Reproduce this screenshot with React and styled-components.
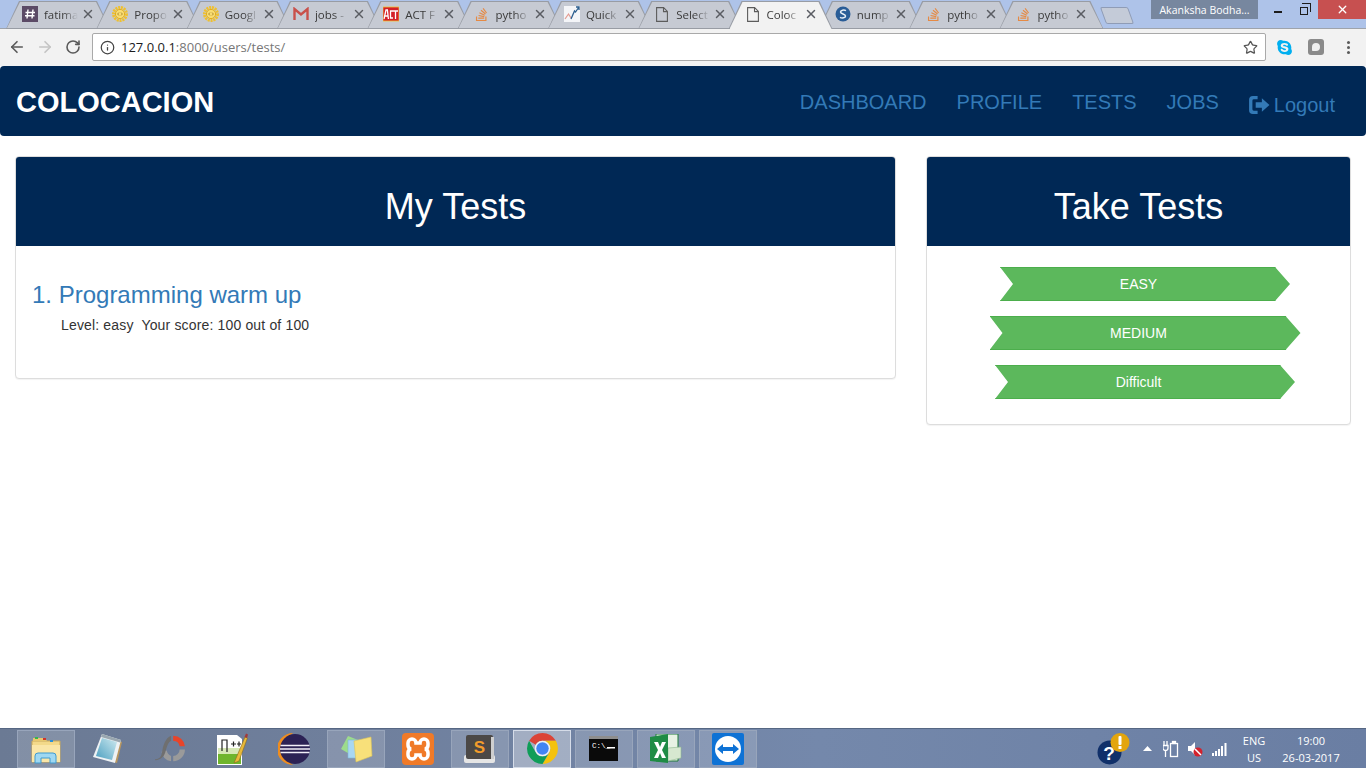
import React from 'react';
import styled, { createGlobalStyle } from 'styled-components';
import { ArrowLeft, ArrowRight, RotateCw, Info, Star, X } from 'lucide-react';
import { FaStackOverflow, FaSkype } from 'react-icons/fa';

const GlobalStyle = createGlobalStyle`
  html, body {
    margin: 0;
    padding: 0;
    background: #fff;
    font-family: "Liberation Sans", Arial, sans-serif;
    font-size: 14px;
    color: #333;
  }
  * { box-sizing: border-box; }
`;

const Page = styled.div`
  width: 1366px;
  height: 768px;
  display: flex;
  flex-direction: column;
  overflow: hidden;
`;

/* browser chrome */
const TabStrip = styled.div`
  height: 29px;
  flex: none;
  display: flex;
  align-items: flex-start;
  padding-left: 6px;
  background: #aec3e9;
  border-bottom: 1px solid #9ea3ab;
`;

const Tab = styled.div`
  position: relative;
  width: 104px;
  height: 28px;
  margin-top: 1px;
  margin-right: -13.7px;
  flex: none;
  display: flex;
  align-items: center;
  padding: 0 0 2px 16px;
  z-index: ${({ $active }) => ($active ? 2 : 1)};
  clip-path: polygon(0 100%, 13px 0, calc(100% - 13px) 0, 100% 100%);
  background: #989ca4;

  &::before {
    content: '';
    position: absolute;
    inset: 1px 1px ${({ $active }) => ($active ? '0' : '1px')} 1px;
    clip-path: polygon(0 100%, 13px 0, calc(100% - 13px) 0, 100% 100%);
    background: ${({ $active }) => ($active ? '#f2f2f2' : '#c6cad3')};
  }
`;

const FavIcon = styled.span`
  position: relative;
  width: 16px;
  height: 16px;
  flex: none;
  display: flex;
  align-items: center;
  justify-content: center;
`;

const TabTitle = styled.span`
  position: relative;
  width: 34px;
  margin-left: 6px;
  overflow: hidden;
  white-space: nowrap;
  font-family: "Open Sans", sans-serif;
  font-size: 11.5px;
  color: #3a3a3a;
  -webkit-mask-image: linear-gradient(90deg, #000 55%, transparent 100%);
  mask-image: linear-gradient(90deg, #000 55%, transparent 100%);
`;

const TabClose = styled(X)`
  position: relative;
  margin-left: 3px;
  flex: none;
  color: #5a5d63;
`;

const NewTab = styled.div`
  width: 28px;
  height: 17px;
  margin: 7px 0 0 13px;
  flex: none;
  transform: skewX(20deg);
  border: 1px solid #8f9cb6;
  border-radius: 2px;
  background: #c4cbd8;
`;

const ProfileChip = styled.div`
  width: 107px;
  height: 19px;
  margin-left: auto;
  flex: none;
  display: flex;
  align-items: center;
  justify-content: center;
  background: #77879f;
  color: #fff;
  font-family: "Open Sans", sans-serif;
  font-size: 10.5px;
`;

const WindowControls = styled.div`
  width: 108px;
  height: 19px;
  flex: none;
  display: flex;
  align-items: center;
`;

const WindowButton = styled.div`
  height: 19px;
  width: ${({ $w }) => $w}px;
  display: flex;
  align-items: center;
  justify-content: center;
  color: #fff;
  background: ${({ $close }) => ($close ? '#c75050' : 'transparent')};
`;

const Minimize = styled.span`
  width: 8px;
  height: 2px;
  margin-top: 5px;
  background: #1c1c1c;
`;

const Restore = styled.span`
  position: relative;
  width: 8px;
  height: 8px;
  margin: 3px 8px 0 0;
  border: 1.5px solid #1c1c1c;

  &::before {
    content: '';
    position: absolute;
    left: 1px;
    top: -5px;
    width: 8px;
    height: 8px;
    border-top: 1.5px solid #1c1c1c;
    border-right: 1.5px solid #1c1c1c;
  }
`;

const Toolbar = styled.div`
  height: 37px;
  flex: none;
  display: flex;
  align-items: center;
  padding: 0 8px 1px 8px;
  background: #f2f2f2;
`;

const NavIcon = styled.span`
  width: 18px;
  height: 18px;
  margin-right: 10px;
  flex: none;
  display: flex;
  align-items: center;
  justify-content: center;
  color: ${({ $off }) => ($off ? '#c4c4c4' : '#5a5a5a')};
`;

const Omnibox = styled.div`
  width: 1174px;
  height: 28px;
  flex: none;
  display: flex;
  align-items: center;
  padding: 0 7px;
  background: #fff;
  border: 1px solid #a9a9a9;
  border-radius: 2px;
`;

const Url = styled.span`
  margin-left: 6px;
  font-family: "Open Sans", sans-serif;
  font-size: 13px;
  color: #1c1c1c;

  span { color: #767676; }
`;

const OmniStar = styled(Star)`
  margin-left: auto;
  color: #555;
`;

const ExtensionSlot = styled.span`
  width: 32px;
  margin-left: ${({ $first }) => ($first ? '2px' : '0')};
  flex: none;
  display: flex;
  justify-content: center;
  align-items: center;
  color: #00aff0;
`;

const ExtSquare = styled.span`
  width: 16px;
  height: 16px;
  display: flex;
  align-items: center;
  justify-content: center;
  border-radius: 3px;
  background: #8a8a8a;

  &::before {
    content: '';
    width: 8px;
    height: 8px;
    border-radius: 50% 50% 50% 10%;
    background: #f0f0f0;
  }
`;

const MenuDots = styled.span`
  width: 3px;
  height: 3px;
  margin-left: 15px;
  border-radius: 50%;
  background: #5a5a5a;
  box-shadow: 0 -5px 0 #5a5a5a, 0 5px 0 #5a5a5a;
`;

/* site */
const Navbar = styled.nav`
  height: 70px;
  flex: none;
  display: flex;
  align-items: center;
  padding: 2px 31px 0 16px;
  background: #002855;
  border-radius: 4px;
`;

const Brand = styled.a`
  color: #fff;
  font-size: 29px;
  font-weight: 700;
`;

const NavLinks = styled.div`
  margin-left: auto;
  display: flex;
  align-items: center;
  gap: 30px;
`;

const NavLink = styled.a`
  color: #337ab7;
  font-size: 20px;
  line-height: 24px;
`;

const LogoutLink = styled(NavLink)`
  display: flex;
  align-items: center;
  gap: 4px;
  margin-top: 6px;
`;

const Content = styled.main`
  flex: 1;
  display: grid;
  grid-template-columns: 881px 425px;
  column-gap: 30px;
  align-items: start;
  padding: 20px 15px 0;
`;

const Panel = styled.section`
  background: #fff;
  border: 1px solid #ddd;
  border-radius: 4px;
  box-shadow: 0 1px 1px rgba(0, 0, 0, 0.05);
  overflow: hidden;
`;

const PanelHeading = styled.div`
  height: 89px;
  padding-top: 11px;
  display: flex;
  align-items: center;
  justify-content: center;
  background: #002855;
  color: #fff;
  font-size: 36px;
`;

const TestsBody = styled.div`
  height: 132px;
  padding: 36px 16px 0;
`;

const TestTitle = styled.a`
  display: block;
  color: #337ab7;
  font-size: 24px;
  line-height: 26px;
`;

const TestMeta = styled.p`
  margin: 7px 0 0 29px;
  line-height: 20px;
  letter-spacing: 0.16px;
  color: #333;
`;

const LevelsBody = styled.div`
  display: flex;
  flex-direction: column;
  align-items: center;
  gap: 15px;
  padding: 21px 0 25px;
`;

const LevelButton = styled.a`
  width: ${({ $width }) => $width}px;
  height: 34px;
  margin-left: 13px;
  padding-right: 13px;
  display: flex;
  align-items: center;
  justify-content: center;
  color: #fff;
  background: #5cb85c;
  border-top: 1px solid #4cae4c;
  border-bottom: 1px solid #4cae4c;
  clip-path: polygon(0 0, calc(100% - 15px) 0, 100% 50%, calc(100% - 15px) 100%, 0 100%, 13px 50%);
`;

/* taskbar */
const Taskbar = styled.footer`
  height: 40px;
  flex: none;
  display: flex;
  align-items: center;
  gap: 4px;
  padding: 0 0 0 17px;
  background: linear-gradient(90deg, #6b7a94 0%, #6f7f9c 25%, #7488ab 60%, #6a7ea3 100%);
  border-top: 1px solid #566783;
`;

const TaskItem = styled.div`
  width: 58px;
  height: 38px;
  flex: none;
  display: flex;
  align-items: center;
  justify-content: center;
  border: 1px solid ${({ $state }) => ($state === 'active' ? '#d5dce8' : $state === 'open' ? '#98a5bb' : 'transparent')};
  background: ${({ $state }) => ($state === 'active' ? 'rgba(255,255,255,0.35)' : $state === 'open' ? 'rgba(255,255,255,0.16)' : 'transparent')};
`;

const Tray = styled.div`
  margin-left: auto;
  height: 38px;
  display: flex;
  align-items: center;
  padding-right: 19px;
  color: #fff;
  font-family: "Open Sans", sans-serif;
  font-size: 11px;
`;

const TrayIcon = styled.span`
  width: ${({ $w }) => $w}px;
  display: flex;
  justify-content: center;
  align-items: center;
  flex: none;
`;

const TrayText = styled.div`
  width: ${({ $w }) => $w}px;
  flex: none;
  text-align: center;
  line-height: 17px;
`;

const HashIcon = () => (
  <svg width="16" height="16" viewBox="0 0 16 16"><rect width="16" height="16" fill="#5b4a66" /><path d="M6 3.500 5 12.500M11 3.500l-1 9M3.500 6.500h9.500M3 9.700h9.500" stroke="#fff" strokeWidth="1.400" /></svg>
);
const GearIcon = () => (
  <svg width="16" height="16" viewBox="0 0 16 16"><circle cx="8" cy="8" r="6.500" fill="none" stroke="#efc02f" strokeWidth="3" strokeDasharray="2 .8" /><circle cx="8" cy="8" r="4.600" fill="#f8dd72" stroke="#e4ae1c" /><path d="M7 6.500 5.600 8 7 9.500M9 6.500 10.400 8 9 9.500" stroke="#9a7420" strokeWidth=".8" fill="none" /></svg>
);
const GmailIcon = () => (
  <svg width="16" height="14" viewBox="0 0 16 14"><path d="M1.500 13V2L8 7.500 14.500 2v11" fill="none" stroke="#c9504a" strokeWidth="2.400" /></svg>
);
const ActIcon = () => (
  <svg width="16" height="16" viewBox="0 0 16 16"><rect y="1" width="16" height="14" fill="#d4202a" /><path d="M1 13 3 4h1.400l1 9M2 10h3M10 5H7.500v7H10M10 5h5M12.500 5v8" fill="none" stroke="#fff" strokeWidth="1.300" /><rect y="1" width="16" height="14" fill="none" stroke="#f2c230" strokeWidth=".8" /></svg>
);
const SoIcon = () => <FaStackOverflow size={15} color="#e58a45" />;
const QuickIcon = () => (
  <svg width="16" height="16" viewBox="0 0 16 16"><rect width="16" height="16" fill="#f4f5f8" /><path d="M1 13 4.500 8l2.500 4" fill="none" stroke="#e39a90" strokeWidth="1.200" /><path d="M7 13l3.500-8 1 1L15 1M12 1h3v3" fill="none" stroke="#2e5f8f" strokeWidth="1.300" /></svg>
);
const PageIcon = () => (
  <svg width="12" height="15" viewBox="0 0 12 15"><path d="M.6.6h7l3.800 3.800v10H.6zM7.500.6v4h3.800" fill="none" stroke="#5c5c5c" strokeWidth="1.100" /></svg>
);
const ScipyIcon = () => (
  <svg width="16" height="16" viewBox="0 0 16 16"><circle cx="8" cy="8" r="7.500" fill="#2a5d97" /><path d="M11 4.600C9 3.600 5.500 4 5.500 6S10.500 8 10.500 10 7 12.500 5 11.300" fill="none" stroke="#e6edf5" strokeWidth="1.500" /></svg>
);

const tabs = [
  { title: 'fatima', icon: <HashIcon /> },
  { title: 'Propo', icon: <GearIcon /> },
  { title: 'Googl', icon: <GearIcon /> },
  { title: 'jobs -', icon: <GmailIcon /> },
  { title: 'ACT F', icon: <ActIcon /> },
  { title: 'pytho', icon: <SoIcon /> },
  { title: 'Quick', icon: <QuickIcon /> },
  { title: 'Select', icon: <PageIcon /> },
  { title: 'Coloc', icon: <PageIcon />, active: true },
  { title: 'nump', icon: <ScipyIcon /> },
  { title: 'pytho', icon: <SoIcon /> },
  { title: 'pytho', icon: <SoIcon /> },
];

const LogoutIcon = () => (
  <svg width="21" height="18" viewBox="0 0 22 19">
    <path d="M9 0H4a4 4 0 0 0-4 4v11a4 4 0 0 0 4 4h5v-3.500H5a1.500 1.500 0 0 1-1.500-1.500V5A1.500 1.500 0 0 1 5 3.500h4z" fill="#337ab7" />
    <path d="M7 6.500h6.500V2.500L21.500 9.500l-8 7v-4H7z" fill="#337ab7" />
  </svg>
);

const ExplorerIcon = () => (
  <svg width="32" height="32" viewBox="0 0 32 32">
    <path d="M2 8h28v21H2z" fill="#f3d98a" stroke="#c9a95a" />
    <path d="M3 5h12l2 3H3z" fill="#e9c86e" />
    <rect x="5" y="4" width="3" height="2" fill="#39b54a" /><rect x="13" y="5" width="3" height="2" fill="#d0342c" /><rect x="20" y="7" width="3" height="2" fill="#2a8fd8" />
    <path d="M2 12h28v17H2z" fill="#fae6a8" />
    <path d="M5 30v-7a3 3 0 0 1 3-3h15a3 3 0 0 1 3 3v7h-6v-5h-9v5z" fill="#9fd8f2" stroke="#3f9ad0" />
  </svg>
);
const NotepadIcon = () => (
  <svg width="32" height="32" viewBox="0 0 32 32">
    <defs>
      <linearGradient id="padFill" x1="0" y1="1" x2="1" y2="0">
        <stop offset="0" stopColor="#4b9fc0" />
        <stop offset="1" stopColor="#cfeaf0" />
      </linearGradient>
    </defs>
    <path d="M11 2 30 9l-5 21-3-1z" fill="#b8965f" />
    <path d="M10 1 29 7 23 30 1 24z" fill="#eef2f4" />
    <path d="M10 5 25 9 20 27 4 23z" fill="url(#padFill)" />
    <path d="M10 1 29 7l-.8 2.500L9 4z" fill="#9aa7b0" />
  </svg>
);
const CircleIcon = () => (
  <svg width="32" height="32" viewBox="1 3 30 27" fill="none">
    <path d="M19 4a11 11 0 0 1 11 10h-5a6 6 0 0 0-6-5z" fill="#e8442a" />
    <path d="M30 17a11 11 0 0 1-11 11v-5a6 6 0 0 0 6-6z" fill="#9a9a9a" />
    <path d="M17 28a11 11 0 0 1-9-9l5-1a6 6 0 0 0 4 5z" fill="#9a9a9a" />
    <path d="M2 26c6 0 6-4 7-9s3-11 8-13v5c-3 1-4 6-5 9-1 5-4 9-10 9z" fill="#6f6f6f" />
  </svg>
);
const NotepadPlusIcon = () => (
  <svg width="32" height="34" viewBox="0 0 32 34">
    <path d="M1 3h20l5 4v26H1z" fill="#fff" />
    <path d="M2 22h23v10H2z" fill="#6fb52c" />
    <path d="M2 16h23v6H2z" fill="#d6e8b4" />
    <path d="M6 19V8h5v12" fill="none" stroke="#222" strokeWidth="1.200" />
    <path d="M15 12h5M17.500 9.500v5M21 12h4M23 9.500v5" stroke="#222" strokeWidth="1.200" />
    <path d="M18 31 29 5l2.500 1L23 29z" fill="#e8b93a" stroke="#8a6a20" strokeWidth=".6" />
    <path d="M28.500 5 30 1.500l2 1L31 6z" fill="#a23a3a" />
  </svg>
);
const EclipseIcon = () => (
  <svg width="32" height="32" viewBox="0 0 32 32">
    <path d="M15 0a16 16 0 1 0 0 32A20 20 0 0 1 15 0z" fill="#ef8d1f" />
    <circle cx="17" cy="16" r="15" fill="#2c2255" />
    <path d="M2.500 12.500h29M2 16h30M2.500 19.500h29" stroke="#f1eef8" strokeWidth="1.500" />
  </svg>
);
const StickyIcon = () => (
  <svg width="34" height="30" viewBox="0 0 34 30">
    <path d="M2 15 9 2l10 4-5 16z" fill="#9ddc8c" />
    <path d="M9 6h14v18H9z" fill="#a9d7f2" stroke="#7eb5d8" strokeWidth=".6" />
    <path d="M15 7 32 3l1 19-16 6z" fill="#f8e07a" stroke="#d8c25a" strokeWidth=".6" />
  </svg>
);
const XamppIcon = () => (
  <svg width="32" height="32" viewBox="0 0 32 32">
    <rect width="32" height="32" rx="4" fill="#f07a28" />
    <path d="M6 10a4 4 0 0 1 8 0h4a4 4 0 0 1 8 0v2a4 4 0 0 1-3 4 4 4 0 0 1 3 4v2a4 4 0 0 1-8 0h-4a4 4 0 0 1-8 0v-2a4 4 0 0 1 3-4 4 4 0 0 1-3-4z" fill="none" stroke="#fff" strokeWidth="3.500" />
  </svg>
);
const SublimeIcon = () => (
  <svg width="32" height="30" viewBox="0 0 32 30">
    <rect x="0" y="21" width="31" height="8" rx="2" fill="#e5e5e5" />
    <rect x="2" y="1" width="27" height="24" rx="2" fill="#4b4846" />
    <rect x="27" y="3" width="3" height="22" fill="#cfcfcf" />
    <text x="15.500" y="19" textAnchor="middle" fontFamily="Liberation Sans" fontWeight="700" fontSize="17" fill="#f29c2b">S</text>
  </svg>
);
const ChromeIcon = () => (
  <svg width="31" height="31" viewBox="4 4 40 40">
    <path d="M6.700 14A20 20 0 0 1 41.300 14H24A10 10 0 0 0 15.300 19Z" fill="#db4437" />
    <path d="M41.300 14A20 20 0 0 1 24 44L32.700 29A10 10 0 0 0 24 14Z" fill="#f4c20d" />
    <path d="M24 44A20 20 0 0 1 6.700 14L15.300 29A10 10 0 0 0 32.700 29Z" fill="#0f9d58" />
    <circle cx="24" cy="24" r="10" fill="#f1f3f4" />
    <circle cx="24" cy="24" r="8" fill="#4285f4" />
  </svg>
);
const CmdIcon = () => (
  <svg width="30" height="25" viewBox="0 0 30 25">
    <rect width="29" height="25" fill="#0a0a0a" />
    <rect width="29" height="3" fill="#8e8e8e" />
    <text x="3" y="12" fontFamily="Liberation Mono" fontSize="7.500" fill="#fff">C:\_</text>
    <rect x="18" y="11" width="8" height="1.500" fill="#fff" />
  </svg>
);
const ExcelIcon = () => (
  <svg width="32" height="30" viewBox="0 0 32 30">
    <path d="M6 0h22v27H6z" fill="#e8f2e4" stroke="#1e7a3a" />
    <path d="M18 14 31 13v11l-13 3z" fill="#d7e8d0" stroke="#8fb88f" strokeWidth=".6" />
    <path d="M0 3 18 0v29L0 27z" fill="#1f8c45" />
    <path d="M4 8h4l2 5 2-5h4l-4 8 4 8h-4l-2-5-2 5H4l4-8z" fill="#fff" />
  </svg>
);
const TeamViewerIcon = () => (
  <svg width="32" height="32" viewBox="0 0 32 32">
    <rect width="32" height="32" rx="2" fill="#0e72d5" />
    <circle cx="16" cy="16" r="13" fill="#fff" />
    <path d="M5 16l6-5v3h10v-3l6 5-6 5v-3H11v3z" fill="#0e72d5" />
  </svg>
);

const taskItems = [
  { icon: <ExplorerIcon />, state: 'open' },
  { icon: <NotepadIcon /> },
  { icon: <CircleIcon /> },
  { icon: <NotepadPlusIcon /> },
  { icon: <EclipseIcon /> },
  { icon: <StickyIcon />, state: 'open' },
  { icon: <XamppIcon /> },
  { icon: <SublimeIcon />, state: 'open' },
  { icon: <ChromeIcon />, state: 'active' },
  { icon: <CmdIcon />, state: 'open' },
  { icon: <ExcelIcon />, state: 'open' },
  { icon: <TeamViewerIcon />, state: 'open' },
];

const HelpAlertIcon = () => (
  <svg width="33" height="32" viewBox="0 0 33 32">
    <circle cx="12.500" cy="19.500" r="12" fill="#10306a" />
    <text x="12" y="27" textAnchor="middle" fontFamily="Liberation Sans" fontWeight="700" fontSize="19" fill="#fff">?</text>
    <circle cx="23" cy="9.500" r="9.500" fill="#e3a50e" />
    <rect x="21.500" y="3" width="3" height="9" rx="1" fill="#fff" />
    <rect x="21.500" y="13" width="3" height="3" fill="#fff" />
  </svg>
);
const BatteryIcon = () => (
  <svg width="16" height="18" viewBox="0 0 16 18" fill="none" stroke="#fff" strokeWidth="1.300">
    <path d="M1 1v4M4 1v4M0 5.500h5V8a2.500 2.500 0 0 1-5 0zM2.500 10.500V17" />
    <rect x="7.500" y="3.500" width="7" height="13" />
    <rect x="9.500" y="1.500" width="3" height="2" fill="#fff" />
  </svg>
);
const MutedIcon = () => (
  <svg width="16" height="16" viewBox="0 0 16 16">
    <path d="M1 5h3l4-4v13L4 10H1z" fill="#fff" />
    <circle cx="11" cy="11" r="4.500" fill="#d3212c" />
    <path d="M8 8 14 14" stroke="#fff" strokeWidth="1.500" />
  </svg>
);
const SignalIcon = () => (
  <svg width="16" height="14" viewBox="0 0 16 14" fill="#fff">
    <rect x="0" y="11" width="2" height="3" /><rect x="3" y="9" width="2" height="5" /><rect x="6" y="7" width="2" height="7" /><rect x="9" y="4" width="2" height="10" /><rect x="12.500" y="1" width="2" height="13" />
  </svg>
);

const App = () => (
  <Page>
    <GlobalStyle />
    <TabStrip>
      {tabs.map((t, i) => (
        <Tab key={i} $active={t.active}>
          <FavIcon>{t.icon}</FavIcon>
          <TabTitle>{t.title}</TabTitle>
          <TabClose size={14} strokeWidth={2.5} />
        </Tab>
      ))}
      <NewTab />
      <ProfileChip>Akanksha Bodha...</ProfileChip>
      <WindowControls>
        <WindowButton $w={40}><Minimize /></WindowButton>
        <WindowButton $w={20}><Restore /></WindowButton>
        <WindowButton $w={48} $close><X size={13} strokeWidth={2.5} /></WindowButton>
      </WindowControls>
    </TabStrip>

    <Toolbar>
      <NavIcon><ArrowLeft size={18} strokeWidth={2.2} /></NavIcon>
      <NavIcon $off><ArrowRight size={18} strokeWidth={2.2} /></NavIcon>
      <NavIcon><RotateCw size={16} strokeWidth={2.4} /></NavIcon>
      <Omnibox>
        <Info size={15} color="#444" strokeWidth={2} />
        <Url>127.0.0.1<span>:8000/users/tests/</span></Url>
        <OmniStar size={15} strokeWidth={2} />
      </Omnibox>
      <ExtensionSlot $first><FaSkype size={17} /></ExtensionSlot>
      <ExtensionSlot><ExtSquare /></ExtensionSlot>
      <MenuDots />
    </Toolbar>

    <Navbar>
      <Brand>COLOCACION</Brand>
      <NavLinks>
        <NavLink>DASHBOARD</NavLink>
        <NavLink>PROFILE</NavLink>
        <NavLink>TESTS</NavLink>
        <NavLink>JOBS</NavLink>
        <LogoutLink><LogoutIcon />Logout</LogoutLink>
      </NavLinks>
    </Navbar>

    <Content>
      <Panel>
        <PanelHeading>My Tests</PanelHeading>
        <TestsBody>
          <TestTitle>1. Programming warm up</TestTitle>
          <TestMeta>Level: easy&nbsp; Your score: 100 out of 100</TestMeta>
        </TestsBody>
      </Panel>
      <Panel>
        <PanelHeading>Take Tests</PanelHeading>
        <LevelsBody>
          <LevelButton $width={290}>EASY</LevelButton>
          <LevelButton $width={311}>MEDIUM</LevelButton>
          <LevelButton $width={300}>Difficult</LevelButton>
        </LevelsBody>
      </Panel>
    </Content>

    <Taskbar>
      {taskItems.map((item, i) => (
        <TaskItem key={i} $state={item.state}>{item.icon}</TaskItem>
      ))}
      <Tray>
        <TrayIcon $w={44}><HelpAlertIcon /></TrayIcon>
        <TrayIcon $w={24}><svg width="9" height="5" viewBox="0 0 9 5"><path d="M0 5 4.500 0 9 5z" fill="#fff" /></svg></TrayIcon>
        <TrayIcon $w={24}><BatteryIcon /></TrayIcon>
        <TrayIcon $w={24}><MutedIcon /></TrayIcon>
        <TrayIcon $w={26}><SignalIcon /></TrayIcon>
        <TrayText $w={42}>ENG<br />US</TrayText>
        <TrayText $w={72}>19:00<br />26-03-2017</TrayText>
      </Tray>
    </Taskbar>
  </Page>
);

export default App;
